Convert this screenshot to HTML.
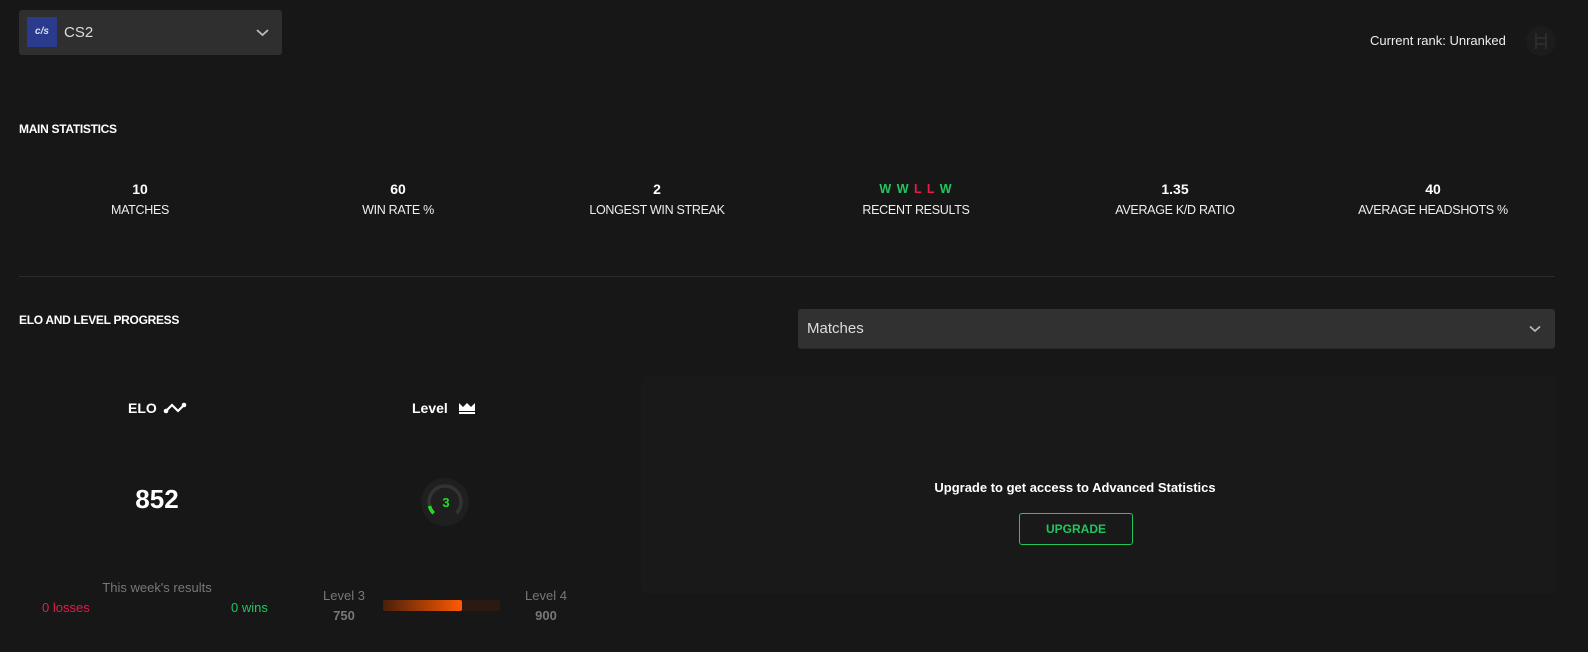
<!DOCTYPE html>
<html><head><meta charset="utf-8"><style>
*{margin:0;padding:0;box-sizing:border-box}
body{width:1588px;height:652px;background:#171717;color:#fff;font-family:"Liberation Sans",sans-serif;position:relative;overflow:hidden}
.a{position:absolute}
.c{text-align:center;transform:translateX(-50%)}
.h{font-size:12px;font-weight:bold;letter-spacing:-0.3px}
.num{font-size:14px;font-weight:bold;height:17px;line-height:17px}
.lab{font-size:12.5px;color:#eee;letter-spacing:-0.3px}
</style></head><body>
<div class="a" style="left:19px;top:10px;width:263px;height:45px;background:#2f2f2f;border-radius:3px"></div>
<div class="a" style="left:27px;top:17px;width:30px;height:30px;background:#2a3a8c;color:#dde;font-size:10px;font-style:italic;font-weight:bold;text-align:center;line-height:30px">c/s</div>
<div class="a" style="left:64px;top:24px;font-size:15px;color:#ddd">CS2</div>
<svg class="a" style="left:256px;top:28px" width="13" height="9"><path d="M1 2l5.5 5 5.5-5" stroke="#bbb" stroke-width="1.8" fill="none"/></svg>
<div class="a" style="left:1370px;top:33px;font-size:13px;color:#eee">Current rank: Unranked</div>
<div class="a" style="left:1526px;top:26px;width:30px;height:30px;border-radius:50%;background:#1c1c1c"></div>
<svg class="a" style="left:1533px;top:32px" width="16" height="18"><path d="M3 1v16M13 1v16M3 6h10M3 12h10" stroke="#2b2b2b" stroke-width="2.2"/></svg>

<div class="a h" style="left:19px;top:122px">MAIN STATISTICS</div>
<div class="a c" style="left:140px;top:181px"><div class="num">10</div><div class="lab" style="margin-top:5px">MATCHES</div></div>
<div class="a c" style="left:398px;top:181px"><div class="num">60</div><div class="lab" style="margin-top:5px">WIN RATE %</div></div>
<div class="a c" style="left:657px;top:181px;white-space:nowrap"><div class="num">2</div><div class="lab" style="margin-top:5px">LONGEST WIN STREAK</div></div>
<div class="a c" style="left:916px;top:181px;white-space:nowrap"><div class="num" style="font-size:12.5px;letter-spacing:1px"><span style="color:#22c55e">W W </span><span style="color:#e11d48">L L </span><span style="color:#22c55e">W</span></div><div class="lab" style="margin-top:5px">RECENT RESULTS</div></div>
<div class="a c" style="left:1175px;top:181px;white-space:nowrap"><div class="num">1.35</div><div class="lab" style="margin-top:5px">AVERAGE K/D RATIO</div></div>
<div class="a c" style="left:1433px;top:181px;white-space:nowrap"><div class="num">40</div><div class="lab" style="margin-top:5px">AVERAGE HEADSHOTS %</div></div>
<div class="a" style="left:19px;top:276px;width:1536px;height:1px;background:#2c2c2c"></div>

<div class="a h" style="left:19px;top:313px">ELO AND LEVEL PROGRESS</div>
<div class="a" style="left:798px;top:309px;width:757px;height:40px;background:#313131;border-radius:3px;border-bottom:1px solid #262626"></div>
<div class="a" style="left:807px;top:320px;font-size:15px;color:#ddd">Matches</div>
<svg class="a" style="left:1529px;top:325px" width="12" height="8"><path d="M1 1.5l5 4.5 5-4.5" stroke="#bbb" stroke-width="1.6" fill="none"/></svg>

<div class="a" style="left:641px;top:376px;width:915px;height:218px;background:#191919;border-radius:6px"></div>
<div class="a c" style="left:1075px;top:480px;font-size:13px;font-weight:bold;white-space:nowrap">Upgrade to get access to Advanced Statistics</div>
<div class="a" style="left:1019px;top:513px;width:114px;height:32px;border:1px solid #22c55e;border-radius:3px;color:#22c55e;font-size:12px;font-weight:bold;text-align:center;line-height:30px">UPGRADE</div>

<div class="a" style="left:128px;top:400px;font-size:14px;font-weight:bold">ELO</div>
<svg class="a" style="left:163px;top:401px" width="24" height="13"><path d="M3 10L9 4L15 10L21 4" stroke="#fff" stroke-width="2.2" fill="none"/><circle cx="3" cy="10" r="2.3" fill="#fff"/><circle cx="21" cy="4" r="2.3" fill="#fff"/></svg>
<div class="a" style="left:412px;top:400px;font-size:14px;font-weight:bold">Level</div>
<svg class="a" style="left:458px;top:402px" width="18" height="12"><path d="M1 1l4 4 4-4 4 4 4-4v8H1z" fill="#fff"/><rect x="1" y="10" width="16" height="2" fill="#fff"/></svg>
<div class="a c" style="left:157px;top:484px;font-size:26px;font-weight:bold">852</div>
<svg class="a" style="left:421px;top:478px" width="48" height="48"><circle cx="24" cy="24" r="24" fill="#1f1f1f"/><circle cx="24" cy="24" r="16" stroke="#333" stroke-width="3.5" fill="none" stroke-dasharray="75 100" transform="rotate(135 24 24)"/><path d="M12.7 35.3A16 16 0 0 1 8.5 28" stroke="#22dd22" stroke-width="3.5" fill="none"/><text x="25" y="29" fill="#22dd22" font-size="13" font-weight="bold" text-anchor="middle" font-family="Liberation Sans">3</text></svg>

<div class="a c" style="left:157px;top:580px;font-size:13px;color:#777;white-space:nowrap">This week's results</div>
<div class="a" style="left:42px;top:600px;font-size:13px;color:#e11d48">0 losses</div>
<div class="a" style="left:231px;top:600px;font-size:13px;color:#22c55e">0 wins</div>
<div class="a c" style="left:344px;top:588px;font-size:13px;color:#777;white-space:nowrap">Level 3</div>
<div class="a c" style="left:344px;top:608px;font-size:13px;color:#777;font-weight:bold">750</div>
<div class="a" style="left:383px;top:600px;width:117px;height:11px;background:#2b1a12;border-radius:2px"></div>
<div class="a" style="left:383px;top:600px;width:79px;height:11px;background:linear-gradient(90deg,#4a1f0a,#ff5a00);border-radius:2px"></div>
<div class="a c" style="left:546px;top:588px;font-size:13px;color:#777;white-space:nowrap">Level 4</div>
<div class="a c" style="left:546px;top:608px;font-size:13px;color:#777;font-weight:bold">900</div>
</body></html>
